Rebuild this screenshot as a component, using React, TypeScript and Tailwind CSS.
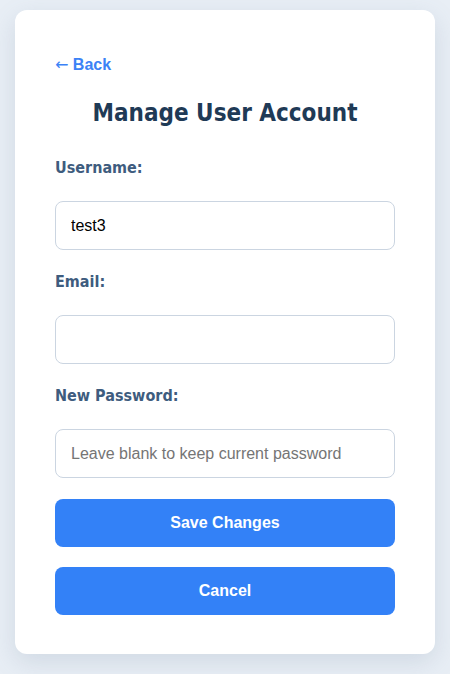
import React from "react";

export default function App() {
  const label = "block text-[16px] font-bold text-[#3e5c7e] [font-family:Tahoma,'DejaVu_Sans_Condensed','DejaVu_Sans',sans-serif]";
  const input = "block w-full h-[49px] rounded-[8px] border border-[#cbd5e1] bg-white px-[15px] text-[16px] text-black placeholder:text-[#757575] outline-none [font-family:'Liberation_Sans',Arial,sans-serif]";
  const btn = "block w-full h-[48px] rounded-[8px] bg-[#3381f7] text-white text-[16px] font-bold [font-family:'Liberation_Sans',Arial,sans-serif]";
  return (
    <div className="min-h-[674px] w-[450px] bg-[#e8eef5] pt-[10px] px-[15px]">
      <div className="rounded-[12px] bg-white px-[40px] pt-[42px] pb-[39px] shadow-[0_8px_24px_rgba(100,120,150,0.18)]">
        <a className="inline-block text-[16px] font-bold text-[#3b82f6] leading-[22px] [font-family:'Liberation_Sans',Arial,sans-serif]">
          <span className="font-normal [font-family:'DejaVu_Sans',sans-serif]">←</span> Back
        </a>
        <h1 className="mt-[22px] text-center text-[24px] font-bold leading-[30px] text-[#1f3a56] [font-family:Tahoma,'DejaVu_Sans_Condensed','DejaVu_Sans',sans-serif]">Manage User Account</h1>
        <label className={`${label} mt-[30px] leading-[20px]`}>Username:</label>
        <input className={`${input} mt-[23px]`} defaultValue="test3" />
        <label className={`${label} mt-[22px] leading-[20px]`}>Email:</label>
        <input className={`${input} mt-[23px]`} defaultValue="" />
        <label className={`${label} mt-[22px] leading-[20px]`}>New Password:</label>
        <input className={`${input} mt-[23px]`} placeholder="Leave blank to keep current password" />
        <button className={`${btn} mt-[21px]`}>Save Changes</button>
        <button className={`${btn} mt-[20px]`}>Cancel</button>
      </div>
    </div>
  );
}
